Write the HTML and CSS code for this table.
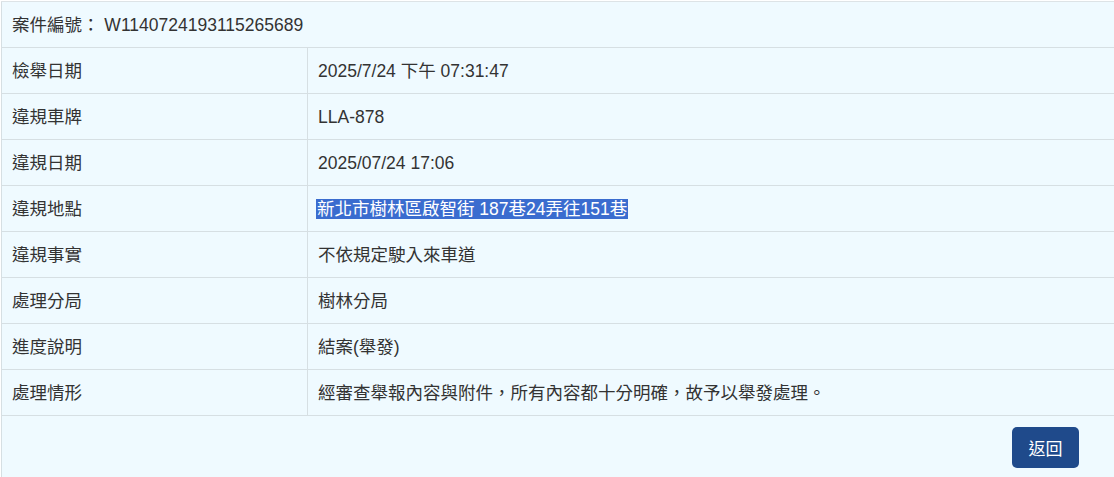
FILE: index.html
```html
<!DOCTYPE html>
<html lang="zh-Hant">
<head>
<meta charset="utf-8">
<title>案件查詢</title>
<link rel="stylesheet" href="styles.css">
</head>
<body>
<div class="wrap">
<table class="detail">
  <tr><td class="head" colspan="2">案件編號： W1140724193115265689</td></tr>
  <tr><td class="label">檢舉日期</td><td class="value">2025/7/24 下午 07:31:47</td></tr>
  <tr><td class="label">違規車牌</td><td class="value">LLA-878</td></tr>
  <tr><td class="label">違規日期</td><td class="value">2025/07/24 17:06</td></tr>
  <tr><td class="label">違規地點</td><td class="value"><span class="sel">新北市樹林區啟智街 187巷24弄往151巷</span></td></tr>
  <tr><td class="label">違規事實</td><td class="value">不依規定駛入來車道</td></tr>
  <tr><td class="label">處理分局</td><td class="value">樹林分局</td></tr>
  <tr><td class="label">進度說明</td><td class="value">結案(舉發)</td></tr>
  <tr><td class="label">處理情形</td><td class="value">經審查舉報內容與附件，所有內容都十分明確，故予以舉發處理。</td></tr>
  <tr><td class="actions" colspan="2"><button class="btn">返回</button></td></tr>
</table>
</div>
</body>
</html>
```
FILE: styles.css
```css
html, body {
  margin: 0;
  padding: 0;
  background: #ffffff;
}
body {
  font-family: "Liberation Sans", Arial, "Noto Sans CJK TC", sans-serif;
  font-size: 17.5px;
  color: #333333;
}
.wrap {
  padding: 1px 0 0 1px;
}
.detail {
  width: 1113px;
  border-collapse: collapse;
  background: #effaff;
}
.detail td {
  border: 1px solid #d6dfe3;
  padding: 11px 10px 10px 10px;
  line-height: 24px;
  height: 24px;
  vertical-align: middle;
}
.detail tr:first-child td {
  border-top-color: #dde3e6;
}
.detail td:last-child {
  border-right: none;
}
.detail .label {
  width: 285px;
}
.detail .head {
  padding-left: 10px;
}
.sel {
  background: #3a6ccf;
  color: #ffffff;
  padding: 0 1px;
  margin-left: -2px;
}
.detail .actions {
  text-align: right;
  padding: 10px 35px 9px 10px;
  border-bottom: none;
  height: 43px;
}
.btn {
  background: #1f4a8b;
  color: #ffffff;
  border: none;
  border-radius: 5px;
  font-family: "Noto Sans CJK TC", sans-serif;
  font-size: 17px;
  width: 67px;
  height: 41px;
  padding: 0;
  cursor: pointer;
}
```
